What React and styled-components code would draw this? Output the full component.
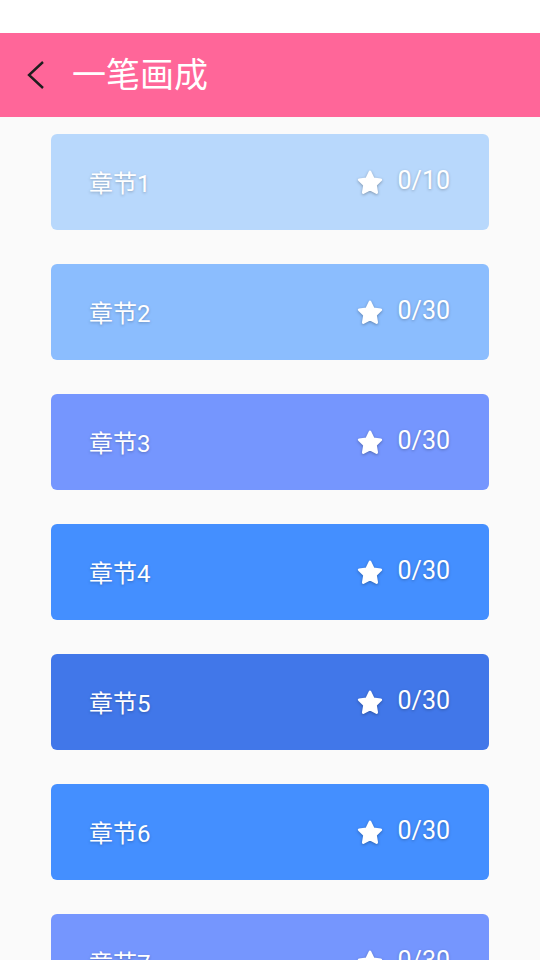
import React from "react";
import styled, { createGlobalStyle } from "styled-components";

// --------------------------------------------------

const GlobalStyle = createGlobalStyle`
	html, body {
		margin: 0;
		padding: 0;
		background: #fafafa;
		font-family: Roboto, "Noto Sans CJK SC", sans-serif;
	}
	* { box-sizing: border-box; }
`;

const Page = styled.div`
	width: 540px;
	height: 960px;
	overflow: hidden;
	display: flex;
	flex-direction: column;
	background: #fafafa;
`;

const StatusBar = styled.div`
	height: 33px;
	background: #ffffff;
	flex-shrink: 0;
`;

const Toolbar = styled.div`
	height: 84px;
	flex-shrink: 0;
	background: #ff6699;
	display: flex;
	align-items: center;
	padding-left: 24px;
	gap: 22px;
`;

const BackButton = styled.div`
	width: 26px;
	height: 30px;
	display: flex;
	align-items: center;
	justify-content: center;
`;

const Title = styled.div`
	color: #ffffff;
	font-size: 34px;
	line-height: 1;
`;

const List = styled.div`
	display: flex;
	flex-direction: column;
	gap: 34px;
	padding: 17px 51px 0;
`;

const Card = styled.div`
	height: 96px;
	flex-shrink: 0;
	border-radius: 6px;
	background: ${ p => p.color };
	display: flex;
	align-items: center;
	justify-content: space-between;
	padding: 0 39px 0 38px;
	color: #ffffff;
	text-shadow: 0 1px 3px rgba(0, 0, 0, 0.25);
`;

const Name = styled.div`
	font-size: 24px;
	margin-top: -1px;
`;

const Score = styled.div`
	display: flex;
	align-items: center;
	gap: 14px;
	font-size: 25px;
	margin-top: -3px;
`;

const StarIcon = styled.svg`
	width: 28px;
	height: 28px;
	filter: drop-shadow(0 1px 1.5px rgba(0, 0, 0, 0.3));
	margin-top: 4px;
`;

const Star = () => (
	<StarIcon viewBox="0 0 24 24">
		<path
			d="M12 2.6 L14.8 8.4 L21.2 9.3 L16.6 13.8 L17.7 20.2 L12 17.2 L6.3 20.2 L7.4 13.8 L2.8 9.3 L9.2 8.4 Z"
			fill="#ffffff"
			stroke="#ffffff"
			strokeWidth="2.4"
			strokeLinejoin="round"
		/>
	</StarIcon>
);

const chapters = [
	{ name: "章节1", score: "0/10", color: "#b8d8fc" },
	{ name: "章节2", score: "0/30", color: "#8bbdfe" },
	{ name: "章节3", score: "0/30", color: "#7596fe" },
	{ name: "章节4", score: "0/30", color: "#448fff" },
	{ name: "章节5", score: "0/30", color: "#4177e9" },
	{ name: "章节6", score: "0/30", color: "#448fff" },
	{ name: "章节7", score: "0/30", color: "#7596fe" },
];

export default function App() {
	return (
		<Page>
			<GlobalStyle />
			<StatusBar />
			<Toolbar>
				<BackButton>
					<svg width="26" height="30" viewBox="0 0 26 30">
						<path d="M19 2 L5 15 L19 28" fill="none" stroke="#1e1e1e" strokeWidth="2.4" />
					</svg>
				</BackButton>
				<Title>一笔画成</Title>
			</Toolbar>
			<List>
				{chapters.map(c => (
					<Card key={ c.name } color={ c.color }>
						<Name>{c.name}</Name>
						<Score>
							<Star />
							<span>{c.score}</span>
						</Score>
					</Card>
				))}
			</List>
		</Page>
	);
}
